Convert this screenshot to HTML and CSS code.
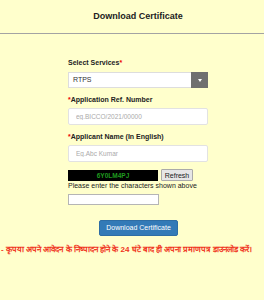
FILE: index.html
```html
<!DOCTYPE html>
<html lang="hi">
<head>
  <meta charset="UTF-8">
  <meta name="viewport" content="width=device-width, initial-scale=1.0">
  <title>Download Certificate</title>
  <link rel="stylesheet" href="styles.css">
</head>
<body>
  <header>
    <h1>Download Certificate</h1>
  </header>
  <main>
    <form id="form-cert">
      <label class="campo">Select Services<span class="req">*</span></label>
      <div class="select-box">
        <span class="select-valor">RTPS</span>
        <span class="select-btn"><i class="flecha"></i></span>
      </div>

      <label class="campo label-2"><span class="req">*</span>Application Ref. Number</label>
      <input type="text" class="texto" placeholder="eg.BICCO/2021/00000">

      <label class="campo label-2"><span class="req">*</span>Applicant Name (In English)</label>
      <input type="text" class="texto" placeholder="Eg.Abc Kumar">

      <div class="captcha-fila">
        <div class="captcha">6Y0LM4PJ</div>
        <button type="button" class="refresh">Refresh</button>
      </div>
      <p class="ayuda">Please enter the characters shown above</p>
      <input type="text" class="captcha-input">

      <div class="acciones">
        <button type="submit" class="descargar">Download Certificate</button>
      </div>
    </form>
  </main>
  <p class="aviso">- कृपया अपने आवेदन के निष्पादन होने के 24 घंटे बाद ही अपना प्रमाणपत्र डाउनलोड करें।</p>
</body>
</html>
```

FILE: styles.css
```css
body {
  font-family: 'Liberation Sans', Arial, sans-serif;
  margin: 0;
  background-color: #ffffcc;
  color: #222;
}
header {
  height: 33px;
  padding-left: 12px;
  border-bottom: 1px solid #a3a3a3;
  text-align: center;
}
h1 {
  margin: 0;
  font-size: 9px;
  line-height: 33px;
  color: #222;
}
main {
  padding: 24px 0 0 68px;
}
form {
  width: 140px;
}
.campo {
  display: block;
  font-size: 7px;
  font-weight: bold;
  line-height: 10px;
  margin-bottom: 4px;
}
.label-2 {
  margin-top: 7px;
  margin-bottom: 3px;
}
.req {
  color: #e00;
}
.select-box {
  display: flex;
  height: 16px;
  box-sizing: border-box;
  background: white;
  border: 1px solid #ddd;
}
.select-valor {
  flex: 1;
  font-size: 7px;
  line-height: 14px;
  padding-left: 4px;
  color: #333;
}
.select-btn {
  width: 17px;
  margin: -1px -1px -1px 0;
  background: #6f6f6f;
  display: flex;
  align-items: center;
  justify-content: center;
}
.flecha {
  width: 0;
  height: 0;
  border-left: 2.5px solid transparent;
  border-right: 2.5px solid transparent;
  border-top: 3px solid white;
}
.texto {
  display: block;
  width: 100%;
  height: 17px;
  box-sizing: border-box;
  margin: 0;
  padding: 0 7px;
  border: 1px solid #e2e2e2;
  border-radius: 2px;
  background: white;
  font-family: inherit;
  font-size: 6.5px;
}
.texto::placeholder {
  color: #aaa;
}
.captcha-fila {
  display: flex;
  gap: 3px;
  margin-top: 7px;
  height: 12px;
}
.captcha {
  width: 90px;
  height: 11px;
  margin-top: 1px;
  background: #000;
  color: #1f9a1f;
  font-size: 6.5px;
  font-weight: bold;
  line-height: 11px;
  text-align: center;
}
.refresh {
  width: 32px;
  height: 12px;
  padding: 0;
  border: 1px solid #aaa;
  border-radius: 1px;
  background: #e6e6e6;
  font-family: inherit;
  font-size: 7px;
  color: #222;
}
.ayuda {
  margin: 0;
  font-size: 7px;
  line-height: 10px;
}
.captcha-input {
  display: block;
  width: 91px;
  height: 11px;
  box-sizing: border-box;
  margin: 3px 0 0;
  border: 1px solid #b5b5b5;
  background: white;
}
.acciones {
  margin-top: 11px;
  text-align: center;
  padding-left: 1px;
}
.descargar {
  width: 79px;
  height: 16px;
  padding: 0;
  background-color: #337ab7;
  border: 1px solid #2e6da4;
  border-radius: 2px;
  color: white;
  font-family: inherit;
  font-size: 7px;
}
.aviso {
  margin: 8px 0 0;
  padding-left: 1px;
  font-size: 8px;
  font-weight: bold;
  line-height: 12px;
  color: #f0341c;
  white-space: nowrap;
}
```
